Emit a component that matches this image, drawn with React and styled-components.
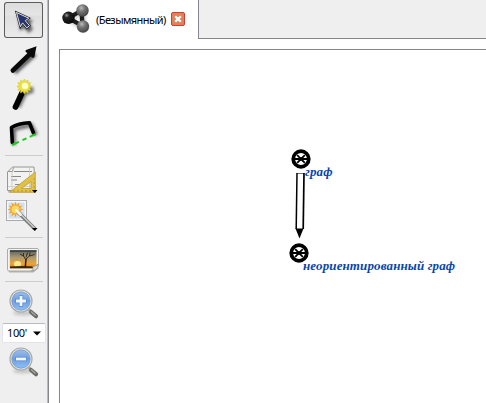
import React from "react";
import styled, { createGlobalStyle } from "styled-components";

const Global = createGlobalStyle`
  html, body { margin: 0; background: #fff; overflow: hidden; }
  * { box-sizing: border-box; }
`;

const Window = styled.div`
  display: flex;
  width: 486px;
  height: 403px;
  background: #fff;
  font-family: "Noto Sans", "Open Sans", sans-serif;
  color: #000;
`;

const Toolbar = styled.nav`
  display: flex;
  flex-direction: column;
  flex: none;
  width: 49px;
  padding-top: 2px;
  background: #efefef;
  border-right: 1px solid #85858f;
  box-shadow: inset -1px 0 #b9b9c1;
`;

const Tool = styled.button`
  flex: none;
  display: block;
  width: 39px;
  height: ${(p) => p.$height}px;
  margin: 0 0 0 4px;
  padding: 0;
  background: ${(p) => (p.$active ? "linear-gradient(#dcdcdc, #e4e4e4 35%, #dedede 40%, #ebebeb)" : "none")};
  border: 0;
  border-radius: 3px;
  box-shadow: ${(p) => (p.$active ? "inset 0 0 0 1px #5c5c5c" : "none")};

  svg { display: block; overflow: visible; }
`;

const Separator = styled.div`
  flex: none;
  width: 38px;
  height: 1px;
  margin-left: 5px;
  background: #cdcdcd;
`;

const ZoomSelect = styled.div`
  flex: none;
  display: flex;
  align-items: center;
  justify-content: space-between;
  width: 44px;
  height: 20px;
  margin-left: 2px;
  padding: 0 4px 0 4px;
  background: #fff;
  border: 1px solid #e1e4ed;
  border-top-color: #b9bbc2;
  border-radius: 2px;
  font-size: 11px;
  letter-spacing: -0.4px;
  line-height: 18px;
`;

const Main = styled.main`
  display: flex;
  flex-direction: column;
  flex: 1;
  min-width: 0;
`;

const TabBar = styled.header`
  display: flex;
  height: 39px;
  flex: none;
`;

const Tab = styled.div`
  display: flex;
  align-items: center;
  width: 149px;
  padding-left: 13px;
  flex: none;
`;

const TabLogo = styled.svg`
  flex: none;
  width: 29px;
  height: 32px;
  margin-top: -4px;
`;

const TabTitle = styled.span`
  width: 72px;
  margin-left: 5px;
  font-size: 11px;
  line-height: 16px;
  letter-spacing: -0.58px;
  white-space: nowrap;
`;

const CloseButton = styled.button`
  display: grid;
  place-items: center;
  width: 14px;
  height: 14px;
  margin-left: 3px;
  margin-top: -1px;
  padding: 0;
  background: #df815b;
  border: 1px solid #d43c2c;
  border-radius: 2px;
`;

const TabFill = styled.div`
  flex: 1;
  background: #efefef;
  border-left: 1px solid #85858f;
  border-bottom: 1px solid #85858f;
`;

const Canvas = styled.section`
  position: relative;
  flex: 1;
  margin: 10px 0 0 10px;
  border-top: 1px solid #85858f;
  border-left: 1px solid #85858f;
`;

const GraphNode = styled.svg`
  position: absolute;
  left: ${(p) => p.$x}px;
  top: ${(p) => p.$y}px;
  width: 20px;
  height: 20px;
`;

const GraphEdge = styled.svg`
  position: absolute;
  left: 230px;
  top: 120px;
  width: 20px;
  height: 72px;
`;

const NodeLabel = styled.span`
  position: absolute;
  left: ${(p) => p.$x}px;
  top: ${(p) => p.$y}px;
  color: #0645ad;
  font: italic bold 13px/16px "Liberation Serif", serif;
  letter-spacing: 0.12px;
  white-space: nowrap;
`;

function Glyph({ top, height, children }) {
  return (
    <svg width="39" height={height} viewBox={`4 ${top} 39 ${height}`} fill="#000">
      {children}
    </svg>
  );
}

function Defs() {
  return (
    <defs>
      <filter id="soft" filterUnits="userSpaceOnUse" x="0" y="0" width="100" height="403">
        <feGaussianBlur stdDeviation="1.7" />
      </filter>
      <filter id="edge" filterUnits="userSpaceOnUse" x="0" y="0" width="100" height="403">
        <feGaussianBlur stdDeviation="0.4" />
      </filter>
      <linearGradient id="lens" x1="0" y1="0" x2="0" y2="1">
        <stop offset="0" stopColor="#9dbde8" />
        <stop offset=".5" stopColor="#6e9fe0" />
        <stop offset="1" stopColor="#8fc0f8" />
      </linearGradient>
      <linearGradient id="sunset" x1="0" y1="0" x2="0" y2="1">
        <stop offset="0" stopColor="#596062" />
        <stop offset=".4" stopColor="#a99a70" />
        <stop offset=".75" stopColor="#f0a334" />
        <stop offset="1" stopColor="#dd7a1c" />
      </linearGradient>
      <radialGradient id="dark" cx=".35" cy=".3" r=".7">
        <stop offset="0" stopColor="#999" />
        <stop offset=".3" stopColor="#222" />
        <stop offset="1" stopColor="#0a0a0a" />
      </radialGradient>
      <radialGradient id="grey" cx=".4" cy=".3" r=".7">
        <stop offset="0" stopColor="#bbb" />
        <stop offset=".4" stopColor="#777" />
        <stop offset="1" stopColor="#444" />
      </radialGradient>
    </defs>
  );
}

function Magnifier({ y, plus }) {
  return (
    <g>
      <ellipse cx="23" cy={y + 12} rx="10" ry="2.500" fill="#888" opacity=".4" filter="url(#soft)" />
      <path d={`M28.500 ${y + 8}l3 3`} stroke="#aaaca8" strokeWidth="3" />
      <path d={`M31 ${y + 11}l5 4.200`} stroke="#686b67" strokeWidth="4.200" strokeLinecap="round" />
      <path d={`M31 ${y + 10.500}l4.500 4`} stroke="#a6a9a3" strokeWidth="1.400" />
      <circle cx="21" cy={y} r="11" fill="#ecede9" stroke="#a9aba6" strokeWidth="1.200" />
      <circle cx="21" cy={y} r="9.200" fill="url(#lens)" stroke="#6b96cc" strokeWidth=".8" />
      <path d={`M15.200 ${y}h11.600${plus ? `M21 ${y - 5.800}v11.600` : ""}`} stroke="#5a8cd0" strokeWidth="4.400" />
      <path d={`M16 ${y}h10${plus ? `M21 ${y - 5}v10` : ""}`} stroke="#f2f6fc" strokeWidth="2.800" />
    </g>
  );
}

function starPoints(cx, cy, outer, inner, count) {
  return Array.from({ length: count * 2 }, (_, i) => {
    const r = i % 2 ? inner : outer;
    const a = (Math.PI * i) / count;
    return `${cx + r * Math.sin(a)},${cy - r * Math.cos(a)}`;
  }).join(" ");
}

function Wheel({ x, y }) {
  return (
    <GraphNode $x={x} $y={y} viewBox="0 0 20 20">
      <circle cx="10" cy="10" r="7.800" fill="#fff" stroke="#000" strokeWidth="3.700" />
      <path d="M4 10h12M6.200 6.200l7.600 7.600M13.800 6.200l-7.600 7.600" stroke="#000" strokeWidth="1.800" />
      <path d="M7.800 8.300h4.400v3.400H7.800z" />
    </GraphNode>
  );
}

export default function App() {
  return (
    <Window>
      <Global />
      <Toolbar>
        <Tool $height={36} $active aria-label="Select">
          <Glyph top={2} height={36}>
            <Defs />
            <path d="M18 14l15 7-3 3 3 5-4 4-5-5-4 3z" fill="#333" opacity=".75" filter="url(#soft)" />
            <path d="M16.500 12.500l12.300 5.700-3.500 2.500 4.200 5-2.700 2.200-4.200-5-2.200 3.800z" fill="#26336e" stroke="#222" strokeWidth="2.200" />
            <path d="M16.500 12.500l12.300 5.700-3.500 2.500 4.200 5-2.700 2.200-4.200-5-2.200 3.800z" fill="#26336e" stroke="#f4f4f4" strokeWidth=".9" />
          </Glyph>
        </Tool>
        <Tool $height={38} aria-label="Arrow">
          <Glyph top={38} height={38}>
            <path d="M14.500 72.500L35 54" stroke="#333" strokeWidth="5" opacity=".75" filter="url(#soft)" />
            <path d="M12.800 70.500L31 53" stroke="#0a0a0a" strokeWidth="4.600" strokeLinecap="round" />
            <path d="M36.500 46.300l-10.500 3.700q-1.500 1 0 2l6 5.500q2 1 2.500-1z" fill="#0a0a0a" />
          </Glyph>
        </Tool>
        <Tool $height={40} aria-label="Wand">
          <Glyph top={76} height={40}>
            <path d="M18 107L25 93l6-2v-4" fill="none" stroke="#333" strokeWidth="5" opacity=".65" filter="url(#soft)" />
            <path d="M15.500 107L22 93" stroke="#000" strokeWidth="5.700" strokeLinecap="round" />
            <polygon points={starPoints(24.300, 86.500, 7.400, 5, 12)} fill="#ede337" stroke="#d3c52c" strokeWidth=".6" />
            <circle cx="25" cy="86" r="3.200" fill="#fffcd2" filter="url(#edge)" />
          </Glyph>
        </Tool>
        <Tool $height={39} aria-label="Polyline">
          <Glyph top={116} height={39}>
            <path d="M14 145V129l17-4 5 10" fill="none" stroke="#333" strokeWidth="4" opacity=".7" filter="url(#soft)" />
            <path d="M12.300 142.500L11.500 127.500Q18 123.500 29.500 122.800L33.500 133" fill="none" stroke="#000" strokeWidth="3.600" strokeLinecap="round" strokeLinejoin="round" />
            <path d="M12 145L35.800 134" stroke="#1fcb1f" strokeWidth="2" strokeDasharray="7.500 4 4.500 3.500" />
          </Glyph>
        </Tool>
        <Separator />
        <Tool $height={41} aria-label="Layout">
          <Glyph top={156} height={41}>
            <rect x="8" y="190.500" width="28" height="2" fill="#777" opacity=".4" filter="url(#edge)" />
            <path d="M12.500 167h21.500l1 23.500H7.500V172z" fill="#f2f2f0" stroke="#969893" />
            <path d="M8 171.500h4.500l1-4" fill="none" stroke="#969893" />
            <path d="M14 171.500h18M11 176.500h10M11 180h6M15 184.500h7" stroke="#888" />
            <path d="M8 186.500h25M12 172v18M29.500 168v20" stroke="#c8c8c6" strokeWidth=".8" />
            <path d="M35.300 172v20.300H9.500zM31 181.500L21.500 188.500H31z" fill="#dfc147" fillRule="evenodd" stroke="#bd9d34" strokeWidth=".8" />
            <path d="M14 192v-2M18 192v-2M22 192v-2M26 192v-2M30 192v-2M35 187h-1.500M35 183h-1.500M35 179h-1.500" stroke="#967919" strokeWidth=".6" />
            <path d="M32 190h5.500l-2.700 3z" />
          </Glyph>
        </Tool>
        <Tool $height={40} aria-label="Magic select">
          <Glyph top={197} height={40}>
            <rect x="7" y="201" width="19.500" height="19" fill="#f5f7f9" />
            <rect x="8.500" y="202.500" width="16" height="16" fill="#d3e0ec" />
            <rect x="6.500" y="200.500" width="20" height="20" fill="none" stroke="#666" strokeDasharray="1 1" />
            <polygon points={starPoints(15.500, 209.500, 8, 4.700, 12)} fill="#f3a02c" />
            <circle cx="15.500" cy="209.500" r="4" fill="#fbd85b" />
            <path d="M18 212L34.500 228.500" stroke="#777a77" strokeWidth="3.800" strokeLinecap="round" />
            <path d="M18 211.500L34 227.500" stroke="#c6c8c4" strokeWidth="1.700" strokeLinecap="round" />
            <path d="M16.500 210.500l4 4" stroke="#f2f2ef" strokeWidth="3" strokeLinecap="round" />
            <path d="M32 228h5.500l-2.700 3z" />
          </Glyph>
        </Tool>
        <Separator />
        <Tool $height={43} aria-label="Image">
          <Glyph top={238} height={43}>
            <path d="M9 271.500h24l5-4" fill="none" stroke="#777" strokeWidth="2" opacity=".5" filter="url(#edge)" />
            <path d="M9 248.500h28q1.500 0 1.500 1.500v16l-5 5H9q-1.500 0-1.500-1.500V250q0-1.500 1.500-1.500z" fill="#f3f3f0" stroke="#aaaca7" />
            <rect x="9.800" y="250.300" width="26.700" height="18" fill="url(#sunset)" />
            <path d="M10 250.300h26.500v1.500H10z" fill="#353b3c" />
            <ellipse cx="17.500" cy="264" rx="3.600" ry="3" fill="#ffe890" filter="url(#edge)" />
            <path d="M10 266.500q10-1 26.500 0v1.800H10z" fill="#3a280f" />
            <path d="M25.300 267l.7-8" stroke="#2b1d0e" strokeWidth="1.500" />
            <path d="M26 260l-2.500-4-3.500-2m3.500 2v-3m2.500 6l3.500-3 5-1.500m-5 1.500l.5-3.500m-4 5l1.500-5" fill="none" stroke="#2b1d0e" strokeWidth=".85" />
            <path d="M31.500 271q2-1 1.500-5 3 1 5-2 .5 4.500-2.500 6z" fill="#dcddda" stroke="#92948f" strokeWidth=".8" />
          </Glyph>
        </Tool>
        <Separator />
        <Tool $height={41} aria-label="Zoom in">
          <Glyph top={282} height={41}><Magnifier y={301} plus /></Glyph>
        </Tool>
        <ZoomSelect>
          100'
          <svg width="8" height="5" viewBox="0 0 8 5"><path d="M0 .5h8l-4 4z" /></svg>
        </ZoomSelect>
        <Tool $height={40} aria-label="Zoom out">
          <Glyph top={343} height={40}><Magnifier y={359} /></Glyph>
        </Tool>
      </Toolbar>
      <Main>
        <TabBar>
          <Tab>
            <TabLogo viewBox="62 1 29 32">
              <path d="M69 18L83 10v17z" fill="none" stroke="#888" strokeWidth="5" opacity=".5" filter="url(#soft)" />
              <path d="M68.500 17L81.500 9.500l1 15.500z" fill="none" stroke="#1c1c1c" strokeWidth="4.300" filter="url(#edge)" />
              <g filter="url(#edge)">
                <circle cx="82.500" cy="9.500" r="6.200" fill="url(#grey)" />
                <circle cx="68.500" cy="16.800" r="6.200" fill="url(#dark)" />
                <circle cx="83" cy="25.500" r="6.200" fill="url(#grey)" />
              </g>
            </TabLogo>
            <TabTitle>(Безымянный)</TabTitle>
            <CloseButton aria-label="Close">
              <svg width="8" height="8" viewBox="0 0 8 8">
                <path d="M1.200 1.200l5.600 5.600M6.800 1.200L1.200 6.800" stroke="#fff" strokeWidth="2.300" />
              </svg>
            </CloseButton>
          </Tab>
          <TabFill />
        </TabBar>
        <Canvas>
          <GraphEdge viewBox="290 170 20 72">
            <path d="M296.500 173.500h7.500L303 229h-7z" fill="#fff" />
            <path d="M296.500 173.500h7.500" stroke="#777" />
            <path d="M297 173L296.200 229" stroke="#000" strokeWidth="1.500" />
            <path d="M304 173L303.200 229" stroke="#000" strokeWidth="1.700" />
            <path d="M295.500 228.500h8L299.500 238.500z" />
          </GraphEdge>
          <Wheel x={231} y={99} />
          <Wheel x={229} y={193} />
          <NodeLabel $x={245} $y={114}>граф</NodeLabel>
          <NodeLabel $x={243} $y={208}>неориентированный граф</NodeLabel>
        </Canvas>
      </Main>
    </Window>
  );
}
